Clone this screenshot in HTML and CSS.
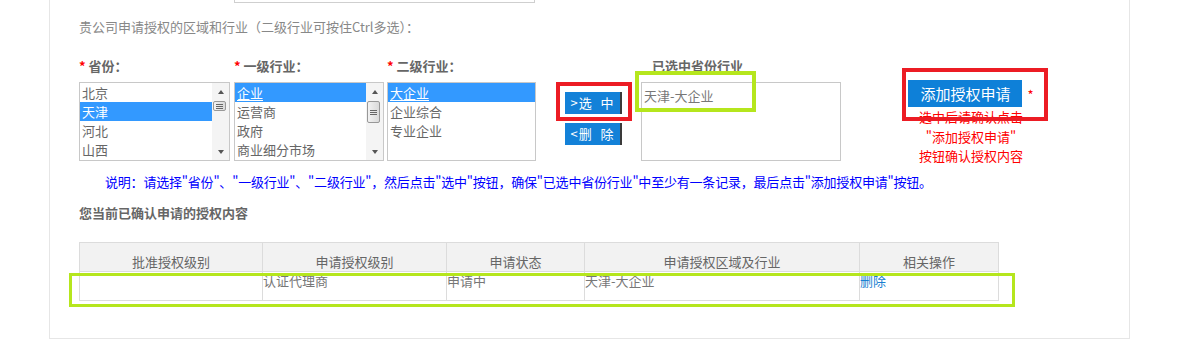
FILE: index.html
```html
<!DOCTYPE html>
<html lang="zh-CN">
  <head>
    <meta charset="UTF-8" />
    <title>授权申请</title>
    <link rel="stylesheet" href="styles.css">
  </head>
  <body>
    <div class="panel">
      <div class="top-field"></div>
      <p class="intro">贵公司申请授权的区域和行业（二级行业可按住Ctrl多选）：</p>

      <div class="pick-row">
        <!-- 省份 -->
        <div class="pick-group g-province">
          <div class="pick-label"><span class="req">*</span>省份：</div>
          <div class="list">
            <ul class="options">
              <li>北京</li>
              <li class="on">天津</li>
              <li>河北</li>
              <li>山西</li>
            </ul>
            <div class="scrollbar">
              <span class="arrow up"></span>
              <div class="track"><div class="thumb thumb-small"><i class="grip"></i></div></div>
              <span class="arrow down"></span>
            </div>
          </div>
        </div>

        <!-- 一级行业 -->
        <div class="pick-group g-industry1">
          <div class="pick-label"><span class="req">*</span>一级行业：</div>
          <div class="list">
            <ul class="options">
              <li class="on"><u>企业</u></li>
              <li>运营商</li>
              <li>政府</li>
              <li>商业细分市场</li>
            </ul>
            <div class="scrollbar">
              <span class="arrow up"></span>
              <div class="track"><div class="thumb thumb-big"><i class="grip"></i></div></div>
              <span class="arrow down"></span>
            </div>
          </div>
        </div>

        <!-- 二级行业 -->
        <div class="pick-group g-industry2">
          <div class="pick-label"><span class="req">*</span>二级行业：</div>
          <div class="list">
            <ul class="options">
              <li class="on"><u>大企业</u></li>
              <li>企业综合</li>
              <li>专业企业</li>
            </ul>
          </div>
        </div>

        <div class="pick-group g-buttons">
          <div class="btn-wrap">
            <button class="move-btn">&gt;选&nbsp;&nbsp;中</button>
            <span class="mark mark-red mark-select"></span>
          </div>
          <button class="move-btn">&lt;删&nbsp;&nbsp;除</button>
        </div>

        <div class="pick-group g-selected">
          <div class="pick-label plain">已选中省份行业</div>
          <div class="list chosen">
            <div class="chosen-item">天津-大企业</div>
            <span class="mark mark-green mark-chosen"></span>
          </div>
        </div>

        <div class="pick-group g-add">
          <div class="add-line">
            <div class="btn-wrap">
              <button class="add-btn">添加授权申请</button>
              <span class="mark mark-red mark-add"></span>
            </div>
            <span class="req add-req">*</span>
          </div>
          <div class="add-tip">选中后请确认点击<br>"添加授权申请"<br>按钮确认授权内容</div>
        </div>
      </div>

      <p class="note">说明：请选择"省份"、"一级行业"、"二级行业"，然后点击"选中"按钮，确保"已选中省份行业"中至少有一条记录，最后点击"添加授权申请"按钮。</p>

      <h4 class="sub-title">您当前已确认申请的授权内容</h4>

      <div class="records">
        <table class="record-table">
          <colgroup>
            <col style="width: 183px" />
            <col style="width: 184px" />
            <col style="width: 138px" />
            <col style="width: 275px" />
            <col style="width: 139px" />
          </colgroup>
          <thead>
            <tr>
              <th>批准授权级别</th>
              <th>申请授权级别</th>
              <th>申请状态</th>
              <th>申请授权区域及行业</th>
              <th>相关操作</th>
            </tr>
          </thead>
          <tbody>
            <tr>
              <td></td>
              <td>认证代理商</td>
              <td>申请中</td>
              <td>天津-大企业</td>
              <td><a href="#" class="del-link">删除</a></td>
            </tr>
          </tbody>
        </table>
        <span class="mark mark-green mark-row"></span>
      </div>
    </div>
  </body>
</html>
```

FILE: styles.css
```css
body {
  margin: 0;
  font-family: "Noto Sans CJK SC", sans-serif;
  font-size: 13px;
  color: #777;
  background: #fff;
}

.panel {
  margin-left: 49px;
  width: 1050px;
  border: 1px solid #e6e6e6;
  border-top: none;
  padding: 0 0 37px 29px;
}

.top-field {
  margin-left: 155px;
  width: 299px;
  height: 2px;
  border: 1px solid #cfcfcf;
  border-top: none;
}

.intro {
  margin: 14px 0 0;
  line-height: 20px;
  color: #888;
}

/* picker row */
.pick-row {
  display: flex;
  height: 110px;
  margin-top: 19px;
}

.pick-group {
  display: flex;
  flex-direction: column;
}

.pick-label {
  height: 20px;
  line-height: 20px;
  margin-bottom: 6px;
  font-weight: bold;
  color: #666;
  white-space: nowrap;
}

.pick-label.plain {
  padding-left: 11px;
}

.req {
  color: #f00;
  font-weight: bold;
  margin-right: 3px;
}

.g-province { width: 151px; }
.g-industry1 { width: 150px; margin-left: 4px; }
.g-industry2 { width: 149px; margin-left: 3px; }
.g-buttons { width: 57px; margin-left: 29px; padding-top: 36px; }
.g-selected { width: 200px; margin-left: 19px; }
.g-add { width: 128px; margin-left: 66px; padding-top: 24px; }

.list {
  position: relative;
  display: flex;
  height: 77px;
  border: 1px solid #c8c8c8;
  background: #fff;
}

.options {
  flex: 1;
  list-style: none;
  margin: 0;
  padding: 0;
}

.options li {
  height: 19px;
  line-height: 19px;
  padding-left: 2px;
  color: #666;
  white-space: nowrap;
}

.options li.on {
  background: #3399ff;
  color: #fff;
}

.options u {
  text-decoration-thickness: 1px;
  text-underline-offset: 2px;
}

/* classic scrollbar */
.scrollbar {
  display: flex;
  flex-direction: column;
  width: 17px;
  background: #f4f4f4;
}

.arrow {
  display: flex;
  height: 17px;
  align-items: center;
  justify-content: center;
}

.arrow::before {
  content: "";
  border-left: 3px solid transparent;
  border-right: 3px solid transparent;
}

.arrow.up::before { border-bottom: 4px solid #555; }
.arrow.down::before { border-top: 4px solid #555; }

.track {
  flex: 1;
  padding-top: 1px;
}

.thumb {
  display: flex;
  align-items: center;
  justify-content: center;
  width: 13px;
  margin-left: 1px;
  border: 1px solid #989898;
  border-radius: 2px;
  background: linear-gradient(to right, #f2f2f2, #dadada);
  box-sizing: border-box;
}

.thumb-small { height: 10px; }
.thumb-big { height: 22px; }

.grip {
  width: 7px;
  height: 3px;
  border-top: 1px solid #666;
  border-bottom: 1px solid #666;
  background: linear-gradient(#666, #666) center / 100% 1px no-repeat;
}

/* move buttons */
.btn-wrap {
  position: relative;
}

.move-btn {
  display: block;
  width: 57px;
  height: 22px;
  padding: 0;
  margin-bottom: 9px;
  border: none;
  border-right: 2px solid #3a3a3a;
  background: #1381d8;
  color: #fff;
  font-family: inherit;
  font-size: 13px;
  line-height: 22px;
  letter-spacing: 1px;
}

.chosen {
  display: block;
}

.chosen-item {
  padding: 3px 0 0 2px;
  line-height: 19px;
  color: #777;
}

/* add button */
.add-line {
  display: flex;
  align-items: center;
  justify-content: center;
  height: 27px;
}

.add-btn {
  display: block;
  width: 114px;
  height: 27px;
  padding: 0;
  border: none;
  background: #0e80d8;
  color: #fff;
  font-family: inherit;
  font-size: 15px;
}

.add-req {
  margin: 2px 0 0 5px;
  font-weight: normal;
}

.add-tip {
  text-align: center;
  line-height: 19.5px;
  color: #f00;
  white-space: nowrap;
}

/* annotation frames */
.mark {
  position: absolute;
  box-sizing: border-box;
  pointer-events: none;
}

.mark-red { border: 4px solid #ec1c24; }
.mark-green { border: 4px solid #b5e61d; }

.mark-select { left: -9px; top: -10px; width: 76px; height: 39px; }
.mark-chosen { left: -7px; top: -12px; width: 121px; height: 41px; }
.mark-add { left: -6px; top: -12px; width: 146px; height: 53px; }
.mark-row { left: -10px; top: 31px; width: 946px; height: 34px; border-width: 3px; }

.note {
  margin: 6px 0 0;
  line-height: 20px;
  text-indent: 26px;
  color: #0000ff;
  white-space: nowrap;
  letter-spacing: -0.2px;
}

.sub-title {
  margin: 11px 0 0;
  line-height: 20px;
  font-size: 13px;
  font-weight: bold;
  color: #666;
}

/* records table */
.records {
  position: relative;
  width: 919px;
  margin-top: 19px;
}

.record-table {
  width: 919px;
  table-layout: fixed;
  border-collapse: collapse;
}

.record-table th,
.record-table td {
  border: 1px solid #dcdcdc;
  font-size: 13px;
  line-height: 18px;
}

.record-table th {
  padding: 10px 0 0;
  background: #f2f2f2;
  font-weight: normal;
  color: #666;
  text-align: center;
}

.record-table td {
  padding: 0 0 10px;
  vertical-align: top;
  color: #777;
  text-align: left;
}

.del-link {
  color: #1a7fd0;
  text-decoration: none;
}
```
